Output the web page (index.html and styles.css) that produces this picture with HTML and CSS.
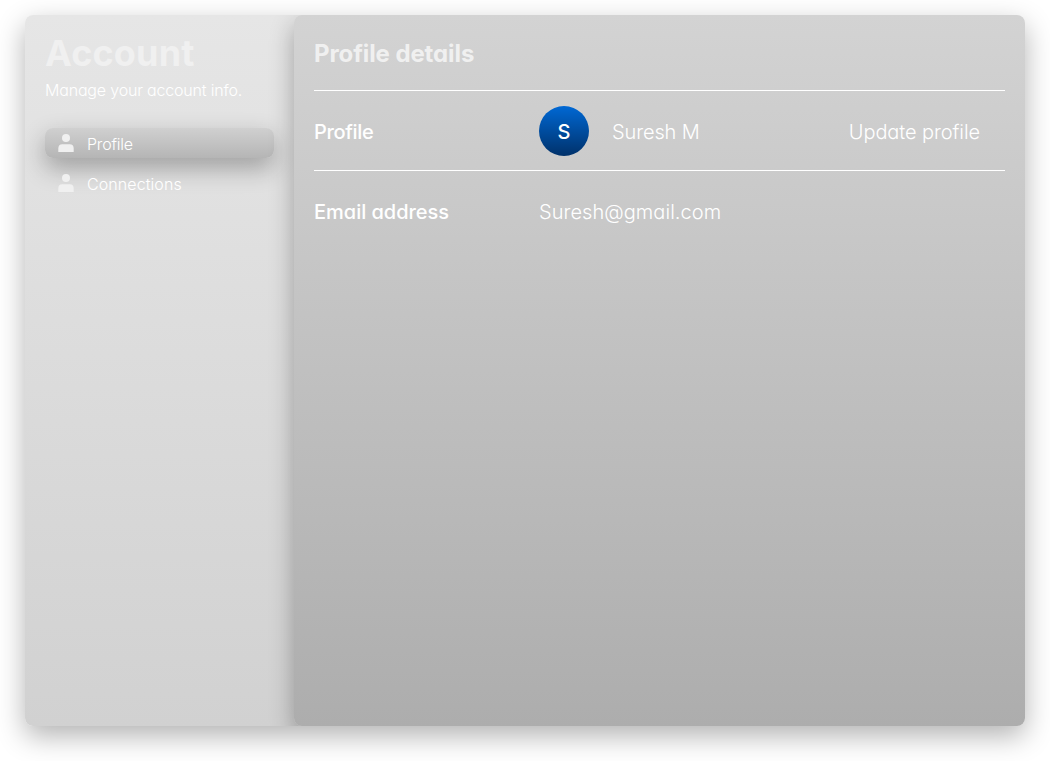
FILE: index.html
```
<!DOCTYPE html>
<html lang="en">
<head>
<meta charset="utf-8">
<title>Account</title>
<link rel="stylesheet" href="styles.css">
</head>
<body>
<main class="card">
  <aside class="sidebar">
    <h1 class="title">Account</h1>
    <p class="subtitle">Manage your account info.</p>
    <nav class="menu">
      <a class="item active"><svg class="icon" viewBox="0 0 16 18"><circle cx="8" cy="4" r="4"/><path d="M.3 18v-3.500Q.3 10.200 4.300 10.200h7.400q4 0 4 4.300V18z"/></svg><span class="label-profile">Profile</span></a>
      <a class="item"><svg class="icon" viewBox="0 0 16 18"><circle cx="8" cy="4" r="4"/><path d="M.3 18v-3.500Q.3 10.200 4.300 10.200h7.400q4 0 4 4.300V18z"/></svg><span class="label-connections">Connections</span></a>
    </nav>
  </aside>
  <section class="panel">
    <h2 class="heading"><span>Profile details</span></h2>
    <div class="row ruled">
      <span class="key key-profile">Profile</span>
      <span class="avatar">S</span>
      <span class="name">Suresh M</span>
      <a class="update">Update profile</a>
    </div>
    <div class="row">
      <span class="key key-email">Email address</span>
      <span class="email">Suresh@gmail.com</span>
    </div>
  </section>
</main>
</body>
</html>
```
FILE: styles.css
```
* { box-sizing: border-box; }
body {
  margin: 0;
  padding: 15px 25px 0;
  height: 761px;
  overflow: hidden;
  background: #fff;
  color: #fff;
  font-family: Inter, "Liberation Sans", sans-serif;
  font-feature-settings: "cv11";
  white-space: nowrap;
}
.card {
  display: flex;
  width: 1000px;
  height: 711px;
  border-radius: 8px;
  overflow: hidden;
  background: linear-gradient(#e6e6e6, #d1d1d1);
  box-shadow: 0 10px 28px rgba(0, 0, 0, .3);
}
.sidebar { width: 269px; padding: 15px 20px; }
.title {
  margin: 0;
  font-size: 36px;
  line-height: 46px;
  font-weight: 700;
  letter-spacing: .15px;
  color: #f0f0f0;
}
.subtitle {
  margin: 3px 0 0;
  font-size: 16px;
  line-height: 22px;
  font-weight: 350;
  letter-spacing: -.18px;
}
.menu { display: flex; flex-direction: column; gap: 10px; margin-top: 27px; }
.item {
  display: flex;
  align-items: center;
  height: 30px;
  padding-left: 13px;
  gap: 13px;
  border-radius: 8px;
  font-size: 16px;
  line-height: 32px;
  font-weight: 350;
}
.item span { padding-top: 2px; }
.label-profile { letter-spacing: -.2px; }
.label-connections { letter-spacing: .08px; }
.active {
  background: linear-gradient(#d0d0d0, #b5b5b5);
  box-shadow: 0 10px 25px rgba(0, 0, 0, .3);
}
.icon { width: 16px; height: 18px; fill: #f0f0f0; }
.panel {
  flex: 1;
  padding: 0 20px;
  border-radius: 8px;
  background: linear-gradient(#d3d3d3, #adadad);
  box-shadow: 0 10px 25px rgba(0, 0, 0, .3);
}
.heading {
  height: 76px;
  margin: 0;
  border-bottom: 1px solid #fff;
  font-size: 24px;
  line-height: 77px;
  font-weight: 700;
  letter-spacing: -.1px;
  color: #f0f0f0;
}
.row { display: flex; align-items: center; height: 80px; font-size: 20px; line-height: 24px; padding-top: 2px; }
.ruled { border-bottom: 1px solid #fff; padding-right: 25px; }
.key { width: 225px; font-weight: 450; }
.key-profile { letter-spacing: -.35px; }
.key-email { letter-spacing: -.02px; }
.avatar {
  display: flex;
  align-items: center;
  justify-content: center;
  width: 50px;
  height: 50px;
  margin: 0 23px 2px 0;
  padding-top: 2px;
  border-radius: 50%;
  background: linear-gradient(#0068d4, #00316a);
  font-weight: 450;
}
.name, .update, .email { font-weight: 300; }
.name { letter-spacing: -.12px; }
.update { margin-left: auto; letter-spacing: -.09px; }
.email { letter-spacing: .05px; }
```
